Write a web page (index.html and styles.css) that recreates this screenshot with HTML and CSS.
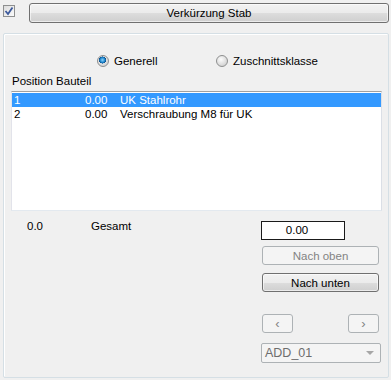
FILE: index.html
```html
<!DOCTYPE html>
<html>
<head>
  <meta charset="UTF-8">
  <title>Verkürzung Stab</title>
  <link rel="stylesheet" href="styles.css">
</head>
<body>
  <div class="top-row">
    <span class="check">
      <svg width="10" height="10" viewBox="0 0 10 10"><path d="M1.5 5 L4 8 L8.5 1.5" fill="none" stroke="#3d5a9c" stroke-width="1.8"/></svg>
    </span>
    <button class="win-btn wide">Verkürzung Stab</button>
  </div>

  <div class="group">
    <div class="radio-row">
      <label class="radio-item first"><span class="radio on"></span>Generell</label>
      <label class="radio-item"><span class="radio"></span>Zuschnittsklasse</label>
    </div>

    <div class="list-label">Position Bauteil</div>
    <div class="list">
      <div class="row selected"><span class="c-pos">1</span><span class="c-val">0.00</span><span>UK Stahlrohr</span></div>
      <div class="row"><span class="c-pos">2</span><span class="c-val">0.00</span><span>Verschraubung M8 für UK</span></div>
    </div>

    <div class="bottom">
      <div class="totals">
        <span class="t-val">0.0</span>
        <span>Gesamt</span>
      </div>
      <div class="side">
        <div class="edit">0.00</div>
        <button class="win-btn side-btn disabled">Nach oben</button>
        <button class="win-btn side-btn down">Nach unten</button>
        <div class="arrows">
          <button class="win-btn arrow disabled">&lsaquo;</button>
          <button class="win-btn arrow disabled">&rsaquo;</button>
        </div>
        <div class="combo">
          <span>ADD_01</span>
          <span class="combo-arrow"></span>
        </div>
      </div>
    </div>
  </div>
</body>
</html>
```

FILE: styles.css
```css
html, body {
  margin: 0;
  padding: 0;
}
body {
  width: 391px;
  height: 380px;
  background: #f0f0f0;
  font-family: "Liberation Sans", Arial, sans-serif;
  font-size: 11.5px;
  color: #000;
  overflow: hidden;
}
.top-row {
  display: flex;
  align-items: flex-start;
  padding-top: 3px;
}
.check {
  box-sizing: border-box;
  width: 12px;
  height: 12px;
  margin: 2px 0 0 3px;
  border: 1px solid #8e8f8f;
  background: linear-gradient(135deg, #dcdcdc, #fbfbfb);
  display: flex;
  align-items: center;
  justify-content: center;
}
.win-btn {
  box-sizing: border-box;
  font-family: "Liberation Sans", Arial, sans-serif;
  font-size: 11.5px;
  color: #000;
  border: 1px solid #707070;
  border-radius: 3px;
  background: linear-gradient(#f2f2f2 0%, #ebebeb 50%, #dddddd 51%, #cfcfcf 100%);
  padding: 0;
  margin: 0;
  box-shadow: inset 0 0 0 1px rgba(255,255,255,0.6);
}
.win-btn.disabled {
  border-color: #adb2b5;
  background: #f4f4f4;
  color: #838383;
  box-shadow: none;
}
.wide {
  width: 360px;
  height: 20px;
  margin-left: 14px;
}
.group {
  box-sizing: border-box;
  width: 386px;
  height: 345px;
  margin: 10px 0 0 3px;
  border: 1px solid #d5dfe5;
  border-radius: 2px;
  box-shadow: inset 1px 1px 0 #fff;
  padding: 0 6px 0 7px;
}
.radio-row {
  display: flex;
  margin-top: 20px;
  padding-left: 86px;
  height: 13px;
}
.radio-item {
  display: flex;
  align-items: center;
  gap: 5px;
}
.radio-item.first {
  width: 119px;
}
.radio {
  box-sizing: border-box;
  width: 12px;
  height: 12px;
  border-radius: 50%;
  border: 1px solid #8e8f8f;
  background: radial-gradient(circle at 40% 35%, #fdfdfd, #d6d6d6 70%);
}
.radio.on {
  background:
    radial-gradient(circle at 45% 40%, #8ad3ff 0, #1c83c9 30%, #0b4f8c 42%, transparent 45%),
    radial-gradient(circle at 40% 35%, #fdfdfd, #d6d6d6 70%);
}
.list-label {
  margin-top: 8px;
  height: 13px;
  line-height: 13px;
  padding-left: 1px;
}
.list {
  box-sizing: border-box;
  margin-top: 3px;
  width: 371px;
  height: 120px;
  background: #fff;
  border: 1px solid #abadb3;
  border-top-color: #a0a0a0;
  border-right-color: #dbdfe6;
  border-bottom-color: #e3e9ef;
  border-left-color: #e2e3ea;
  padding-top: 1px;
}
.row {
  display: flex;
  height: 14px;
  line-height: 14px;
  padding-left: 2px;
}
.row.selected {
  background: #3399ff;
  color: #fff;
}
.c-pos {
  width: 71px;
}
.c-val {
  width: 35px;
}
.bottom {
  display: flex;
  justify-content: space-between;
}
.totals {
  display: flex;
  margin-top: 8px;
  padding-left: 16px;
  height: 14px;
  line-height: 14px;
}
.t-val {
  width: 64px;
}
.side {
  width: 120px;
  margin-right: 1px;
  margin-top: 10px;
  display: flex;
  flex-direction: column;
}
.edit {
  box-sizing: border-box;
  width: 84px;
  height: 19px;
  border: 1px solid #1a1a1a;
  background: #fff;
  text-align: center;
  line-height: 17px;
  padding-right: 12px;
}
.side-btn {
  width: 117px;
  height: 19px;
  margin-left: 1px;
  margin-top: 6px;
}
.side-btn.down {
  margin-top: 8px;
}
.arrows {
  display: flex;
  justify-content: space-between;
  width: 117px;
  margin: 22px 0 0 1px;
}
.arrow {
  width: 31px;
  height: 19px;
  font-size: 13px;
  line-height: 15px;
}
.combo {
  box-sizing: border-box;
  margin-top: 10px;
  width: 120px;
  height: 20px;
  border: 1px solid #adb2b5;
  border-radius: 2px;
  background: #f4f4f4;
  color: #6d6d6d;
  display: flex;
  align-items: center;
  justify-content: space-between;
  padding: 0 6px 0 3px;
  font-size: 12.5px;
}
.combo-arrow {
  width: 0;
  height: 0;
  border-left: 4px solid transparent;
  border-right: 4px solid transparent;
  border-top: 4px solid #a6a6a6;
}
```
